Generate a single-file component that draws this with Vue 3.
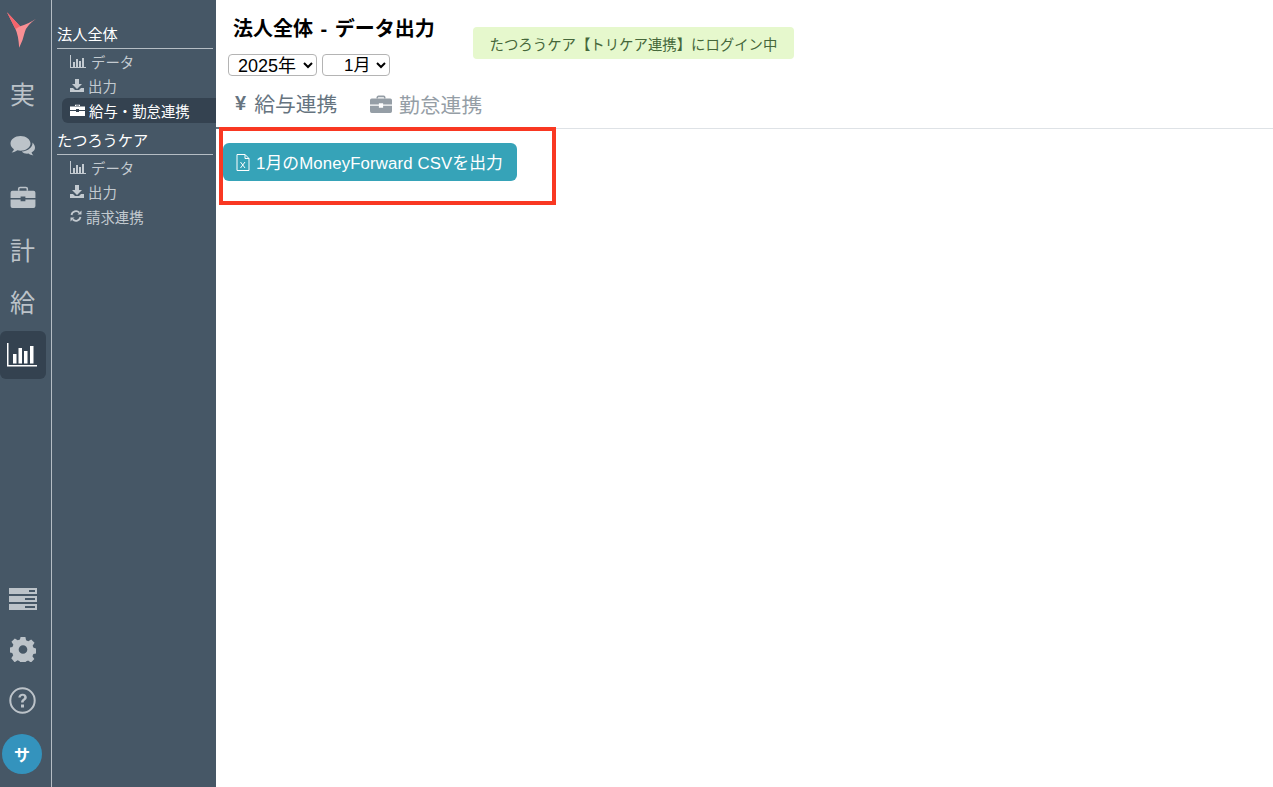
<script setup>
const railTop = [
  { t: '実', y: 'kanji' },
  { y: 'chat' },
  { y: 'case' },
  { t: '計', y: 'kanji' },
  { t: '給', y: 'kanji' },
]
</script>

<template>
  <div class="page">
    <aside class="rail">
      <div class="logo">
        <svg width="30" height="38" viewBox="0 0 32 38"><path d="M0 0 L14 15 Q22 13 31 7 Q21 14 19 21 Q17 30 13 38 Q12 24 9 18 Z" fill="#f98f94"/><path d="M0 0 L14 15 L9 18 Z" fill="#f4646c"/></svg>
      </div>
      <template v-for="(r, i) in railTop" :key="i">
        <div class="rail-item">
          <span v-if="r.t" class="kanji">{{ r.t }}</span>
          <svg v-else-if="r.y === 'chat'" width="26" height="24" viewBox="0 0 26 24"><path d="M10.500 1C5 1 .5 4.300 .5 8.500c0 2.300 1.400 4.300 3.400 5.700-.3 1.300-1.200 2.400-2.300 3.300 2.200-.2 4.200-1 5.800-2.200 1 .3 2 .4 3.100.4 5.500 0 10-3.200 10-7.200S16 1 10.500 1z" fill="#bcc3c9"/><path d="M22.500 7.500c.4 4.600-4.400 8.700-10.700 8.900 1.500 1.600 4 2.600 6.700 2.200 1.300.9 2.900 1.600 4.900 1.800-.9-.8-1.600-1.800-1.900-2.900 2.100-1.100 3.500-2.800 3.500-4.800 0-2-1-3.300-2.500-5.200z" fill="#bcc3c9"/></svg>
          <svg v-else class="rail-case" width="26" height="22" viewBox="0 0 26 23"><path d="M8.500 5V3A1.500 1.500 0 0 1 10 1.500h6A1.500 1.500 0 0 1 17.500 3V5" fill="none" stroke="#bcc3c9" stroke-width="1.600"/><path d="M0 7a2 2 0 0 1 2-2h22a2 2 0 0 1 2 2v5.500H15.500V11h-5v1.500H0z M0 14h10.500v2h5v-2H26V21a2 2 0 0 1-2 2H2a2 2 0 0 1-2-2z" fill="#bcc3c9"/></svg>
        </div>
      </template>
      <div class="rail-active">
        <svg width="30" height="24" viewBox="0 0 30 24"><path d="M0 0h1.500v22H30v1.500H0z" fill="#fff"/><path d="M6 11h3.500v9.500H6zM11.500 5h3.500v15.500h-3.500zM17 8h3.500v12.500H17zM23 3h3.500v17.500H23z" fill="#fff"/></svg>
      </div>
      <div class="rail-bottom">
        <div class="rail-b">
          <svg width="28" height="22" viewBox="0 0 28 22"><path d="M0 0h28v6H0zM0 8h28v6H0zM0 16h28v6H0z" fill="#bcc3c9"/><path d="M20 2h6v2h-6zM16 10h10v2H16zM16 18h10v2H16z" fill="#465766"/></svg>
        </div>
        <div class="rail-b">
          <svg width="26" height="25" viewBox="0 0 26 26"><path fill="#bcc3c9" fill-rule="evenodd" d="M10.500 0h5l.7 3.500 2.300 1 3-2 3.500 3.500-2 3 1 2.300 3 .7v5l-3.200.7-1 2.300 2 3-3.500 3.500-3-2-2.300 1-.7 3h-5l-.7-3.200-2.300-1-3 2L.8 22l2-3-1-2.300-3-.7v-5l3.200-.7 1-2.300-2-3L4.500 1.500l3 2 2.300-1zM13 8.500a4.500 4.500 0 1 0 0 9 4.500 4.500 0 0 0 0-9z"/></svg>
        </div>
        <div class="rail-b">
          <svg width="27" height="27" viewBox="0 0 27 27"><circle cx="13.500" cy="13.500" r="12.200" fill="none" stroke="#bcc3c9" stroke-width="2"/><path d="M9.300 10.500c.2-2.300 1.900-3.800 4.300-3.800 2.500 0 4.200 1.500 4.200 3.600 0 1.600-.9 2.400-2 3.100-1 .7-1.200 1.100-1.200 2.100h-2.500c0-1.900.5-2.700 1.800-3.600.9-.6 1.300-1 1.300-1.700 0-.8-.7-1.400-1.700-1.400s-1.700.7-1.800 1.700z" fill="#bcc3c9"/><rect x="12" y="17.500" width="3" height="3" fill="#bcc3c9"/></svg>
        </div>
        <div class="avatar">サ</div>
      </div>
    </aside>

    <nav class="side">
      <div class="group-title g1">法人全体</div>
      <a class="link"><svg class="ic" width="16" height="13" viewBox="0 0 16 13"><path d="M0 0h1v12h15v1H0z M3 7h2v5H3z M6 4h2v8H6z M9 6h2v6H9z M12 3h2v9h-2z" fill="#c3cad0"/></svg><span class="lt wide">データ</span></a>
      <a class="link"><svg class="ic2" width="14" height="13" viewBox="0 0 14 13"><path d="M5 0h4v5h3L7 10 2 5h3z M0 9h3l2 2h4l2-2h3v4H0z" fill="#c3cad0"/></svg><span class="lt">出力</span></a>
      <a class="link active"><svg class="ic2" width="15" height="12" viewBox="0 0 15 12"><path d="M5 2V.8h5V2h-1V1.600H6V2z M0 2.500h15V6H9V5H6v1H0z M0 7h6v1h3V7h6v5H0z" fill="#fff"/></svg><span class="lt">給与・勤怠連携</span></a>
      <div class="group-title g2">たつろうケア</div>
      <a class="link"><svg class="ic" width="16" height="13" viewBox="0 0 16 13"><path d="M0 0h1v12h15v1H0z M3 7h2v5H3z M6 4h2v8H6z M9 6h2v6H9z M12 3h2v9h-2z" fill="#c3cad0"/></svg><span class="lt wide">データ</span></a>
      <a class="link"><svg class="ic2" width="14" height="13" viewBox="0 0 14 13"><path d="M5 0h4v5h3L7 10 2 5h3z M0 9h3l2 2h4l2-2h3v4H0z" fill="#c3cad0"/></svg><span class="lt">出力</span></a>
      <a class="link"><svg class="ic2" width="12" height="12" viewBox="0 0 12 12"><path d="M1.500 5A4.600 4.600 0 0 1 9.300 2.600M10.500 7A4.600 4.600 0 0 1 2.700 9.400" fill="none" stroke="#c3cad0" stroke-width="1.800"/><path d="M11.500 .5v4h-4zM.5 11.500v-4h4z" fill="#c3cad0"/></svg><span class="lt tight">請求連携</span></a>
    </nav>

    <main class="main">
      <header class="top">
        <div class="head-left">
          <h1 class="title">法人全体 - データ出力</h1>
          <div class="selects">
            <select class="sel sel-y"><option>2025年</option></select>
            <select class="sel sel-m"><option>1月</option></select>
          </div>
        </div>
        <div class="notice">たつろうケア【トリケア連携】にログイン中</div>
      </header>

      <div class="tabs">
        <div class="tab on"><span class="yen">¥</span><span>給与連携</span></div>
        <div class="tab off">
          <svg width="22" height="18" viewBox="0 0 26 21"><path d="M8.500 4V3A1.500 1.500 0 0 1 10 1.500h6A1.500 1.500 0 0 1 17.500 3V4" fill="none" stroke="#959ea6" stroke-width="1.800"/><path d="M0 6a2 2 0 0 1 2-2h22a2 2 0 0 1 2 2v5H15.500V9.500h-5V11H0z M0 12.500h10.500V15h5v-2.500H26V19a2 2 0 0 1-2 2H2a2 2 0 0 1-2-2z" fill="#959ea6"/></svg>
          <span>勤怠連携</span>
        </div>
      </div>

      <div class="content">
        <button class="csv">
          <svg width="14" height="17" viewBox="0 0 14 17"><path d="M1 .5h8l4 4v12H1z M9 .5v4h4" fill="none" stroke="#fff"/><path d="M4.500 8l4.500 6M9 8l-4.500 6" stroke="#fff" fill="none"/></svg>
          <span>1月のMoneyForward CSVを出力</span>
        </button>
      </div>
      <div class="marker"></div>
    </main>
  </div>
</template>

<style scoped>
.page {
  display: flex;
  height: 787px;
  width: 1273px;
  overflow: hidden;
  font-family: "Liberation Sans", "Noto Sans CJK JP", sans-serif;
  background: #fff;
}
.rail {
  width: 51px;
  flex: none;
  background: #465766;
  border-right: 1px solid #b5bdc4;
  display: flex;
  flex-direction: column;
  align-items: flex-start;
  padding-top: 11px;
  box-sizing: content-box;
}
.logo { height: 58px; padding-left: 7px; }
.rail-item {
  width: 45px;
  height: 52px;
  display: flex;
  align-items: center;
  justify-content: center;
}
.rail-case { margin-bottom: 5px; }
.kanji { font-size: 25px; color: #bcc3c9; line-height: 1; }
.rail-active {
  width: 46px;
  height: 48px;
  margin-top: 2px;
  background: #344250;
  border-radius: 6px;
  display: flex;
  align-items: center;
  justify-content: center;
  padding-right: 2px;
  box-sizing: border-box;
}
.rail-bottom { margin-top: auto; width: 45px; padding-bottom: 13px; }
.rail-b {
  height: 51px;
  display: flex;
  align-items: center;
  justify-content: center;
}
.avatar {
  width: 40px;
  height: 40px;
  margin: 8px 0 0 2px;
  border-radius: 50%;
  background: #3493bd;
  color: #fff;
  font-size: 16px;
  font-weight: 700;
  display: flex;
  align-items: center;
  justify-content: center;
}
.side {
  width: 164px;
  flex: none;
  background: #465766;
  padding: 0 0 0 5px;
  box-sizing: border-box;
}
.group-title {
  width: 156px;
  color: #fff;
  font-size: 15.2px;
  line-height: 20px;
  border-bottom: 1px solid #b5bdc4;
  padding: 0 0 3px 0;
}
.g1 { margin-top: 25px; }
.g2 { margin-top: 8.500px; }
.link {
  display: flex;
  align-items: center;
  height: 24.500px;
  margin-left: 5px;
  padding-left: 7px;
  color: #c3cad0;
  font-size: 14.400px;
}
.link.active {
  background: #344250;
  color: #fff;
  border-radius: 6px 0 0 6px;
}
.ic { margin-left: 1px; }
.ic2 { margin-left: 1px; }
.lt { margin-left: 4px; }
.lt.wide { margin-left: 5px; }
.lt.tight { margin-left: 4px; }
.main {
  flex: 1;
  position: relative;
  min-width: 0;
}
.top { display: flex; align-items: flex-start; height: 87px; }
.head-left { width: 257px; padding-left: 12px; box-sizing: border-box; }
.title {
  margin: 15px 0 0 5px;
  font-size: 20px;
  line-height: 29px;
  font-weight: 700;
  color: #000;
  word-spacing: 2px;
}
.selects { display: flex; gap: 5px; margin-top: 10px; }
.sel {
  height: 22px;
  font-size: 18px;
  font-family: "Liberation Sans", "Noto Sans CJK JP", sans-serif;
  background: #fff;
  border: 1px solid #b4b4b4;
  border-radius: 4px;
  color: #000;
  padding: 0;
}
.sel-y { width: 89px; padding-left: 5px; }
.sel-m { width: 68px; padding-left: 17px; font-size: 17px; }
.notice {
  margin-top: 27px;
  width: 321px;
  height: 32px;
  box-sizing: border-box;
  background: #e6f8cd;
  border-radius: 4px;
  color: #45673a;
  font-size: 14.400px;
  display: flex;
  align-items: center;
  justify-content: center;
}
.tabs {
  display: flex;
  height: 42px;
  border-bottom: 1px solid #dee2e6;
  box-sizing: border-box;
}
.tab {
  display: flex;
  align-items: center;
  font-size: 20.800px;
  height: 42px;
  box-sizing: border-box;
  padding-bottom: 8px;
}
.on {
  width: 140px;
  padding-left: 19px;
  color: #66747f;
  border-bottom: 2px solid #66747f;
}
.yen { font-weight: 700; font-size: 20px; margin-right: 8px; }
.off { color: #959ea6; padding-left: 14px; gap: 7px; }
.content { padding: 14px 0 0 7px; }
.csv {
  width: 294px;
  height: 38px;
  background: #36a3b8;
  border: 0;
  border-radius: 6px;
  color: #fff;
  font-family: "Liberation Sans", "Noto Sans CJK JP", sans-serif;
  font-size: 16.800px;
  letter-spacing: 0.120px;
  display: flex;
  align-items: center;
  padding: 0 0 0 13px;
  gap: 6px;
}
.marker {
  position: absolute;
  left: 3px;
  top: 127px;
  width: 337px;
  height: 78px;
  box-sizing: border-box;
  border: 4px solid #f93822;
}
</style>
